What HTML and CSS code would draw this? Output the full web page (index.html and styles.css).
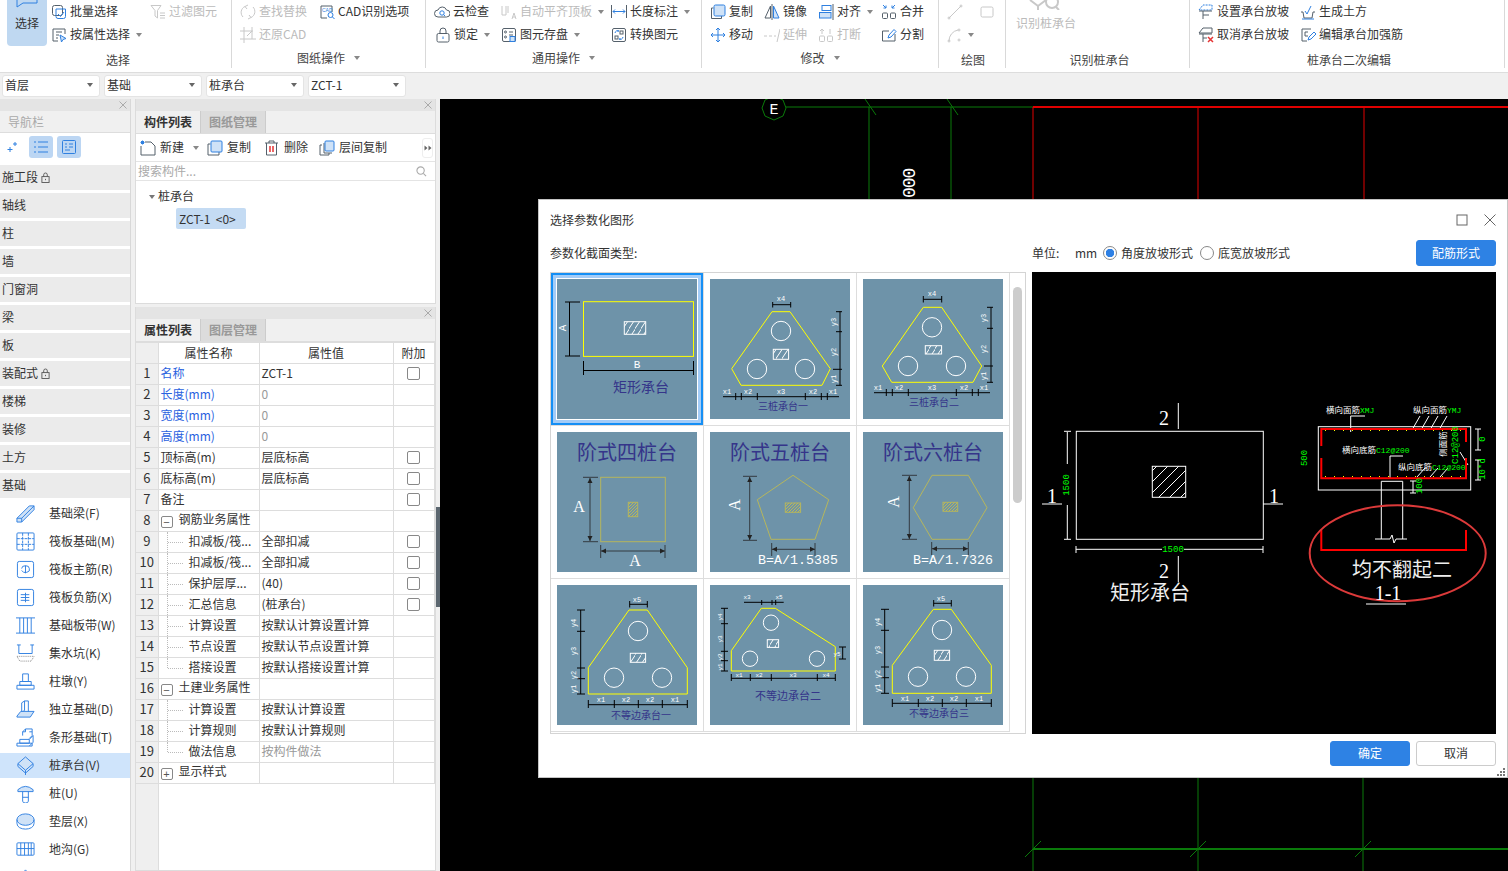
FILE: index.html
```html
<!DOCTYPE html>
<html lang="zh-CN">
<head>
<meta charset="utf-8">
<title>选择参数化图形</title>
<link rel="stylesheet" href="styles.css">
</head>
<body>
<div class="app">
  <header class="ribbon">
    <section class="rg rg1">
      <div class="rg-body">
        <button class="big-select"><svg class="big-arrow" viewBox="0 0 24 8"><path d="M2 0V7L8 3H22V0"/></svg><span>选择</span></button>
        <div class="it"><svg class="ic" viewBox="0 0 16 16"><rect x="1.5" y="1.5" width="10" height="10" rx="2"/><path class="b" d="M5 5H14.5V12.5A2 2 0 0 1 12.5 14.5H7A2 2 0 0 1 5 12.5ZM7 10L9.500 12.500L13 8"/></svg>批量选择</div>
        <div class="it off"><svg class="ic" viewBox="0 0 16 16"><path d="M1 1.500H11L7.500 6.500V14L5 12V6.500ZM10 9H15M10 11.500H15M10 14H15"/></svg>过滤图元</div>
        <div class="it it2"><svg class="ic" viewBox="0 0 16 16"><path d="M14 7V2H2V14H7M5 5H11M5 8H8M5 11H7"/><path class="fb" d="M9 8L15 11.500L12 12.500L10.500 15Z"/></svg>按属性选择<i class="caret"></i></div>
      </div>
      <div class="rg-label">选择</div>
    </section>
    <section class="rg rg2">
      <div class="rg-body">
        <div class="it off"><svg class="ic" viewBox="0 0 16 16"><path d="M3 13A6.500 6.500 0 0 1 5 2.500M13 3A6.500 6.500 0 0 1 11 13.500M8 1L5 2.500L7 5M8 15L11 13.500L9 11"/></svg>查找替换</div>
        <div class="it"><svg class="ic" viewBox="0 0 16 16"><path d="M13 8V2H2V14H8"/><text class="ic-cad" x="3" y="7.500">CAD</text><circle class="b" cx="11.500" cy="11" r="2.500"/><path class="b" d="M13.500 13L15.500 15"/></svg>CAD识别选项</div>
        <div class="it off it-wide"><svg class="ic" viewBox="0 0 16 16"><path d="M4 0V16M0 4H13M0 12H16M12 0V12M7 9L12 4"/></svg>还原CAD</div>
      </div>
      <div class="rg-label">图纸操作<i class="caret"></i></div>
    </section>
    <section class="rg rg3">
      <div class="rg-body">
        <div class="it"><svg class="ic" viewBox="0 0 16 16"><path d="M4 13A3.500 3.500 0 0 1 4 6A4.500 4.500 0 0 1 12.500 6A3.500 3.500 0 0 1 12.500 13Z"/><circle class="b" cx="8" cy="9" r="2.200"/><path class="b" d="M9.500 10.500L11 12"/></svg>云检查</div>
        <div class="it off"><svg class="ic" viewBox="0 0 16 16"><path d="M1 2V11H5V2M7 2V9M11 15L13 9L15 15M11.500 13H14.500"/></svg>自动平齐顶板<i class="caret"></i></div>
        <div class="it"><svg class="ic" viewBox="0 0 16 16"><path d="M0.500 1V14M15.500 1V14"/><path class="b" d="M2 7.500H14M4 5.500L2 7.500L4 9.500M12 5.500L14 7.500L12 9.500"/></svg>长度标注<i class="caret"></i></div>
        <div class="it it-lock"><svg class="ic" viewBox="0 0 16 16"><path d="M5 7V4A3 3 0 0 1 11 4V7"/><rect x="2" y="6.500" width="12" height="8.500" rx="1.500"/><path class="b" d="M8 9.500V12"/></svg>锁定<i class="caret"></i></div>
        <div class="it"><svg class="ic" viewBox="0 0 16 16"><rect x="1.500" y="1.500" width="13" height="13" rx="1.500"/><circle cx="4.500" cy="5" r="1"/><circle cx="4.500" cy="10" r="1"/><path d="M8 5H12M8 8H12"/><rect class="fb" x="9" y="9.500" width="5" height="5"/></svg>图元存盘<i class="caret"></i></div>
        <div class="it"><svg class="ic" viewBox="0 0 16 16"><rect x="1.500" y="1.500" width="13" height="13" rx="1.500"/><path class="b" d="M4 6A3 3 0 0 1 8 4H6M12 10A3 3 0 0 1 8 12H10"/><rect x="4" y="9" width="3" height="3"/><rect x="9" y="4" width="3" height="3"/></svg>转换图元</div>
      </div>
      <div class="rg-label">通用操作<i class="caret"></i></div>
    </section>
    <section class="rg rg4">
      <div class="rg-body">
        <div class="it"><svg class="ic" viewBox="0 0 16 16"><path d="M3.500 4H1.500V14.500H11.500V12"/><rect class="fb" x="4" y="1" width="11" height="11" rx="1.500"/></svg>复制</div>
        <div class="it"><svg class="ic" viewBox="0 0 16 16"><path d="M6.500 2L1 14H6.500Z"/><path class="fb" d="M9.500 2L15 14H9.500Z"/><path d="M8 0V16"/></svg>镜像</div>
        <div class="it"><svg class="ic" viewBox="0 0 16 16"><rect class="b" x="4" y="1.500" width="9" height="5"/><rect class="fb" x="1.500" y="8.500" width="11.500" height="5.500"/><path d="M15 0V16"/></svg>对齐<i class="caret"></i></div>
        <div class="it"><svg class="ic" viewBox="0 0 16 16"><rect x="1.500" y="9" width="5" height="5.500" rx="1"/><rect x="9.500" y="9" width="5" height="5.500" rx="1"/><path class="b" d="M2 1L5 4M5 1.500V4H2.500M14 1L11 4M11 1.500V4H13.500"/></svg>合并</div>
        <div class="it"><svg class="ic" viewBox="0 0 16 16"><path class="b" d="M8 1V15M1 8H15M6 3L8 1L10 3M6 13L8 15L10 13M3 6L1 8L3 10M13 6L15 8L13 10"/></svg>移动</div>
        <div class="it off"><svg class="ic" viewBox="0 0 16 16"><path d="M0 9H3M5 9H8M10 9H12M16 2L13 15"/></svg>延伸</div>
        <div class="it off"><svg class="ic" viewBox="0 0 16 16"><rect x="1.500" y="9" width="5" height="5.500" rx="1"/><rect x="9.500" y="9" width="5" height="5.500" rx="1"/><path d="M4 2V7M12 2V7M2 4L4 2L6 4"/></svg>打断</div>
        <div class="it"><svg class="ic" viewBox="0 0 16 16"><path d="M8 4H1.500V14H14V7"/><path class="b" d="M7 11L8 8L13 2.500L15 4.500L10 10Z"/></svg>分割</div>
      </div>
      <div class="rg-label">修改<i class="caret"></i></div>
    </section>
    <section class="rg rg5">
      <div class="rg-body">
        <div class="it off"><svg class="ic" viewBox="0 0 16 16"><path d="M2 14L14 2"/><circle cx="2" cy="14" r="1"/><circle cx="14" cy="2" r="1"/></svg></div>
        <div class="it off"><svg class="ic" viewBox="0 0 16 16"><rect x="2" y="3" width="12" height="10" rx="1.500"/></svg></div>
        <div class="it off it-arc"><svg class="ic" viewBox="0 0 16 16"><path d="M2 14A11 11 0 0 1 11 3"/><circle cx="2" cy="14" r="1"/><circle cx="12" cy="3" r="1"/><circle cx="12" cy="13" r="1"/></svg><i class="caret"></i></div>
      </div>
      <div class="rg-label">绘图</div>
    </section>
    <section class="rg rg6">
      <div class="rg-body">
        <div class="rec-big"><svg class="rec-icon" viewBox="0 0 32 10"><path d="M1 0L9 6M17 0L9 6M9 6V10"/><circle cx="23" cy="2" r="6"/><path d="M27 7L30 10"/></svg><span>识别桩承台</span></div>
      </div>
      <div class="rg-label">识别桩承台</div>
    </section>
    <section class="rg rg7">
      <div class="rg-body">
        <div class="it"><svg class="ic" viewBox="0 0 16 16"><path class="b" d="M1 6L5 1H14V6Z" stroke-dasharray="2 1"/><path d="M1 7H14M5 7V15M5 11H11"/></svg>设置承台放坡</div>
        <div class="it"><svg class="ic" viewBox="0 0 16 16"><path d="M1 8H3L4 14H12L13 8H15"/><path class="b" d="M5 7L7 10L11 2M2 15H14"/></svg>生成土方</div>
        <div class="it"><svg class="ic" viewBox="0 0 16 16"><path d="M1 6L5 1H14V6ZM1 7H14M5 7V15M5 11H9"/><path class="r" d="M10 10L15 15M15 10L10 15"/></svg>取消承台放坡</div>
        <div class="it"><svg class="ic" viewBox="0 0 16 16"><path d="M11 2H2V14H7M8 5H5V9H8"/><path class="b" d="M8 13L9 10L14 5L16 7L11 12Z"/></svg>编辑承台加强筋</div>
      </div>
      <div class="rg-label">桩承台二次编辑</div>
    </section>
  </header>

  <div class="selectors">
    <div class="combo">首层<i class="caret"></i></div>
    <div class="combo">基础<i class="caret"></i></div>
    <div class="combo">桩承台<i class="caret"></i></div>
    <div class="combo">ZCT-1<i class="caret"></i></div>
  </div>

  <main class="main">
    <aside class="nav">
      <div class="strip"><svg class="x" viewBox="0 0 8 8"><path d="M0.500 0.500L7.500 7.500M7.500 0.500L0.500 7.500"/></svg></div>
      <div class="nav-title">导航栏</div>
      <div class="nav-tools">
        <svg class="nav-star" viewBox="0 0 12 12"><path d="M8 1V5M6 3H10M3 6V11M0.500 8.500H5.500"/></svg>
        <span class="nav-btn"><svg viewBox="0 0 16 16"><path d="M1 3H3M1 8H3M1 13H3M5 3H15M5 8H15M5 13H15"/></svg></span>
        <span class="nav-btn"><svg viewBox="0 0 16 16"><rect x="1.500" y="1.500" width="13" height="13" rx="1"/><path d="M4 5H6M8 5H12M4 8H6M8 8H12M4 11H9"/></svg></span>
      </div>
      <ul class="bands">
        <li>施工段<svg class="lock" viewBox="0 0 10 12"><path d="M3 5V3A2 2 0 0 1 7 3V5"/><rect x="1" y="5" width="8" height="6.500"/><path d="M5 7.500V9"/></svg></li>
        <li>轴线</li><li>柱</li><li>墙</li><li>门窗洞</li><li>梁</li><li>板</li>
        <li>装配式<svg class="lock" viewBox="0 0 10 12"><path d="M3 5V3A2 2 0 0 1 7 3V5"/><rect x="1" y="5" width="8" height="6.500"/><path d="M5 7.500V9"/></svg></li>
        <li>楼梯</li><li>装修</li><li>土方</li><li>基础</li>
      </ul>
      <ul class="subs">
        <li><svg viewBox="0 0 20 20"><path class="fb" d="M1 15L14 2H19V6L6 19H1Z"/><path d="M1 15H6V19M6 15L19 2"/></svg>基础梁(F)</li>
        <li><svg viewBox="0 0 20 20"><rect x="1" y="1" width="18" height="18" rx="1"/><path d="M1 7H19M1 13H19M7 1V19M13 1V19" stroke-dasharray="3 1"/></svg>筏板基础(M)</li>
        <li><svg viewBox="0 0 20 20"><rect x="1.500" y="1.500" width="17" height="17" rx="2"/><path d="M10 6V14M6 9A4 3 0 0 1 14 9A4 3 0 0 1 6 11"/></svg>筏板主筋(R)</li>
        <li><svg viewBox="0 0 20 20"><rect x="1.500" y="1.500" width="17" height="17" rx="2"/><path d="M5 7H14M5 10H14M5 13H14M10 5V15"/></svg>筏板负筋(X)</li>
        <li><svg viewBox="0 0 20 20"><path d="M0 2H20M0 18H20M4 2V18M8 2V18M12 2V18M16 2V18" /></svg>基础板带(W)</li>
        <li><svg viewBox="0 0 20 20"><path d="M3 1V10H17V1M1 1H5M15 1H19"/><path class="g" d="M1 13H19L16 18H4Z" stroke-dasharray="1 1"/></svg>集水坑(K)</li>
        <li><svg viewBox="0 0 20 20"><path d="M7 2H13V10H7ZM4 10H16V14H4ZM1 14H19V18H1Z"/></svg>柱墩(Y)</li>
        <li><svg viewBox="0 0 20 20"><path d="M6 13V3L9 1H13V13M9 1V11L6 13"/><path class="fb" d="M1 17L5 12H19L15 18H1Z"/></svg>独立基础(D)</li>
        <li><svg viewBox="0 0 20 20"><path d="M7 8V4L10 1H17V8L14 11M10 1V4H7M14 4H17"/><path d="M4 12H14V16H4ZM1 16H17V19H1ZM14 12L18 8V15L14 19"/></svg>条形基础(T)</li>
        <li class="on"><svg viewBox="0 0 20 20"><path class="fb" d="M10 1L18 8L10 15L2 8Z"/><path d="M2 8V11L10 18L18 11V8M10 15V20"/></svg>桩承台(V)</li>
        <li><svg viewBox="0 0 20 20"><path class="fb" d="M2 6Q10 -1 18 6V8H2Z"/><path d="M7 8V18A3 2 0 0 0 13 18V8M7 14H13"/></svg>桩(U)</li>
        <li><svg viewBox="0 0 20 20"><ellipse class="fb" cx="10" cy="8" rx="9" ry="6"/><path d="M1 8V12C1 20 19 20 19 12V8"/></svg>垫层(X)</li>
        <li><svg viewBox="0 0 20 20"><rect x="1" y="3" width="18" height="13" rx="1"/><path d="M1 9H19M5 3V16M9 3V16M13 3V16M16 3V16"/></svg>地沟(G)</li>
        <li><svg viewBox="0 0 20 20"><path d="M10 2L5 8H15Z"/></svg></li>
      </ul>
    </aside>

    <div class="col">
      <section class="panel panel-top">
        <div class="strip"><svg class="x" viewBox="0 0 8 8"><path d="M0.500 0.500L7.500 7.500M7.500 0.500L0.500 7.500"/></svg></div>
        <div class="tabs"><span class="tab on">构件列表</span><span class="tab">图纸管理</span></div>
        <div class="bar">
          <span class="tool t-new"><svg class="ic" viewBox="0 0 16 16"><path d="M5 2H11L15 6V15H1V6"/><path class="b" d="M1 1L4 4M4 1L1 4M2.500 0.500V4.500M0.500 2.500H4.500"/></svg>新建<i class="caret"></i></span>
          <span class="tool t-copy"><svg class="ic" viewBox="0 0 16 16"><path d="M3.500 4H1V15H12V12"/><rect class="fb" x="4" y="1" width="11" height="11" rx="1"/></svg>复制</span>
          <span class="tool t-del"><svg class="ic" viewBox="0 0 16 16"><path d="M1 3H14M5 3V1H10V3M2.500 3V15H12.500V3"/><path class="r" d="M6 6V12M9 6V12"/></svg>删除</span>
          <span class="tool"><svg class="ic" viewBox="0 0 16 16"><path d="M3 5H1V15H10V13M5 3V13H13"/><rect class="fb" x="6" y="1" width="9" height="10" rx="1"/></svg>层间复制</span>
          <span class="more"><svg viewBox="0 0 8 6"><path d="M0.500 0.500L3.500 3L0.500 5.500ZM4.500 0.500L7.500 3L4.500 5.500Z"/></svg></span>
        </div>
        <div class="search"><span>搜索构件...</span><svg class="search-ic" viewBox="0 0 12 12"><circle cx="5" cy="5" r="4"/><path d="M8 8L11 11"/></svg></div>
        <div class="tree">
          <div class="tree-root"><i class="tree-caret"></i>桩承台</div>
          <div class="tree-item">ZCT-1 &nbsp;&lt;0&gt;</div>
        </div>
      </section>
      <section class="panel panel-bot">
        <div class="strip"><svg class="x" viewBox="0 0 8 8"><path d="M0.500 0.500L7.500 7.500M7.500 0.500L0.500 7.500"/></svg></div>
        <div class="tabs"><span class="tab on">属性列表</span><span class="tab">图层管理</span></div>
        <div class="prop-body">
          <table class="props">
            <colgroup><col class="c1"><col class="c2"><col class="c3"><col class="c4"></colgroup>
            <thead><tr><th></th><th>属性名称</th><th>属性值</th><th>附加</th></tr></thead>
            <tbody>
              <tr><td class="n">1</td><td class="bl">名称</td><td>ZCT-1</td><td class="ck"><i></i></td></tr>
              <tr><td class="n">2</td><td class="bl">长度(mm)</td><td class="gr">0</td><td></td></tr>
              <tr><td class="n">3</td><td class="bl">宽度(mm)</td><td class="gr">0</td><td></td></tr>
              <tr><td class="n">4</td><td class="bl">高度(mm)</td><td class="gr">0</td><td></td></tr>
              <tr><td class="n">5</td><td>顶标高(m)</td><td>层底标高</td><td class="ck"><i></i></td></tr>
              <tr><td class="n">6</td><td>底标高(m)</td><td>层底标高</td><td class="ck"><i></i></td></tr>
              <tr><td class="n">7</td><td>备注</td><td></td><td class="ck"><i></i></td></tr>
              <tr><td class="n">8</td><td class="grp"><b class="exp">−</b>钢筋业务属性</td><td></td><td></td></tr>
              <tr><td class="n">9</td><td class="ch">扣减板/筏...</td><td>全部扣减</td><td class="ck"><i></i></td></tr>
              <tr><td class="n">10</td><td class="ch">扣减板/筏...</td><td>全部扣减</td><td class="ck"><i></i></td></tr>
              <tr><td class="n">11</td><td class="ch">保护层厚...</td><td>(40)</td><td class="ck"><i></i></td></tr>
              <tr><td class="n">12</td><td class="ch">汇总信息</td><td>(桩承台)</td><td class="ck"><i></i></td></tr>
              <tr><td class="n">13</td><td class="ch">计算设置</td><td>按默认计算设置计算</td><td></td></tr>
              <tr><td class="n">14</td><td class="ch">节点设置</td><td>按默认节点设置计算</td><td></td></tr>
              <tr><td class="n">15</td><td class="ch last">搭接设置</td><td>按默认搭接设置计算</td><td></td></tr>
              <tr><td class="n">16</td><td class="grp"><b class="exp">−</b>土建业务属性</td><td></td><td></td></tr>
              <tr><td class="n">17</td><td class="ch">计算设置</td><td>按默认计算设置</td><td></td></tr>
              <tr><td class="n">18</td><td class="ch">计算规则</td><td>按默认计算规则</td><td></td></tr>
              <tr><td class="n">19</td><td class="ch last">做法信息</td><td class="gr">按构件做法</td><td></td></tr>
              <tr><td class="n">20</td><td class="grp"><b class="exp">+</b>显示样式</td><td></td><td></td></tr>
            </tbody>
          </table>
        </div>
      </section>
    </div>

    <div class="gutter"><span class="handle"></span></div>

    <div class="canvas">
      <svg class="cad" viewBox="0 0 1068 772">
        <g class="cad-g">
          <path d="M346 8H593M429 8V101M511 8V101M425 0L436 16M507 0L518 16"/>
          <path d="M334 -3L343 1L346 9L343 17L334 21L325 17L322 9L325 1Z"/>
          <path d="M593 679V772M758 679V772M923 679V772"/>
          <path class="thick" d="M593 750H1068"/>
          <path d="M585 758L601 742M750 758L766 742M915 758L931 742"/>
        </g>
        <g class="cad-r"><path class="thick" d="M593 8H1068"/><path d="M593 8V101M758 8V101M924 8V101"/></g>
        <text class="cad-e" x="334" y="15">E</text>
        <text class="cad-num" transform="translate(475 99) rotate(-90)">000</text>
      </svg>

      <div class="dialog">
        <div class="d-title"><span>选择参数化图形</span>
          <span class="d-win"><svg viewBox="0 0 12 12"><rect x="1" y="1" width="10" height="10"/></svg><svg viewBox="0 0 12 12"><path d="M0.500 0.500L11.500 11.500M11.500 0.500L0.500 11.500"/></svg></span>
        </div>
        <div class="d-ctrl">
          <span class="d-type">参数化截面类型:</span>
          <span class="d-unit">单位:</span><span class="d-mm">mm</span>
          <label class="radio on"><i></i>角度放坡形式</label>
          <label class="radio"><i></i>底宽放坡形式</label>
          <button class="btn pri d-rebar">配筋形式</button>
        </div>
        <div class="d-content">
          <div class="gallery">
            <div class="grid">
              <div class="cell sel"><svg class="th" viewBox="0 0 140 140">
                <defs>
                  <pattern id="hw" patternUnits="userSpaceOnUse" width="6" height="10"><path d="M-1 11L7 -1" class="hl"/></pattern>
                  <pattern id="hy" patternUnits="userSpaceOnUse" width="3" height="3"><path d="M-1 4L4 -1" class="hd"/></pattern>
                </defs>
                <rect class="y" x="26.500" y="22.700" width="110" height="54.700"/>
                <rect class="w hw" x="67.300" y="42.700" width="21.400" height="12.600"/>
                <path class="k" d="M12.500 23V77M8 23H23M8 77H23M26.500 91.500H136.500M26.500 82V96M136.500 82V96"/>
                <text class="lb" x="80" y="89">B</text>
                <text class="lb" transform="translate(9 49) rotate(-90)">A</text>
                <text class="cap c14" x="84" y="113">矩形承台</text>
              </svg></div>
              <div class="cell"><svg class="th" viewBox="0 0 140 140">
                <path class="y" d="M62 32.700H80L120.300 89.700L112 106.300H31L21.700 89.700Z"/>
                <circle class="w" cx="71" cy="52" r="9.700"/><circle class="w" cx="47" cy="90" r="9.700"/><circle class="w" cx="95" cy="90" r="9.700"/>
                <rect class="w hw" x="63.300" y="70.300" width="15.300" height="10"/>
                <path class="k" d="M62.700 25.700H80.700M62.700 23V28.500M80.700 23V28.500M130 32.700V106.300M126 32.700H132M126 52.700H132M123 90.300H132M126 106.300H132M13 117.700H129M25.700 114V121M31.300 114V121M47.300 114V121M95.300 114V121M111.300 114V121M117.300 114V121"/>
                <text class="sm" x="71" y="22">x4</text><text class="sm" x="17" y="115">x1</text><text class="sm" x="38" y="115">x2</text><text class="sm" x="71" y="115">x3</text><text class="sm" x="103" y="115">x2</text><text class="sm" x="123" y="115">x1</text>
                <text class="sm" transform="translate(126 43) rotate(-90)">y3</text><text class="sm" transform="translate(126 73) rotate(-90)">y2</text><text class="sm" transform="translate(126 100) rotate(-90)">y1</text>
                <text class="cap c10" x="73" y="131">三桩承台一</text>
              </svg></div>
              <div class="cell"><svg class="th" viewBox="0 0 140 140">
                <path class="y" d="M60.300 28.300H78.700L118.700 87L110 103.300H28.700L19.300 87Z"/>
                <circle class="w" cx="69" cy="48.300" r="9.700"/><circle class="w" cx="45" cy="87" r="9.700"/><circle class="w" cx="93" cy="87" r="9.700"/>
                <rect class="w hw" x="62.300" y="66.700" width="16.300" height="8.300"/>
                <path class="k" d="M60.300 20.300H78.700M60.300 17V23.500M78.700 17V23.500M128 28.300V103.300M124 28.300H130M124 49.300H130M121 87H130M124 103.300H130M11 113.700H127M23.300 110V117M29.300 110V117M45.300 110V117M93.300 110V117M109.300 110V117M115.300 110V117"/>
                <text class="sm" x="69" y="17">x4</text><text class="sm" x="15" y="111">x1</text><text class="sm" x="36" y="111">x2</text><text class="sm" x="69" y="111">x3</text><text class="sm" x="101" y="111">x2</text><text class="sm" x="121" y="111">x1</text>
                <text class="sm" transform="translate(123 39) rotate(-90)">y3</text><text class="sm" transform="translate(123 70) rotate(-90)">y2</text><text class="sm" transform="translate(123 97) rotate(-90)">y1</text>
                <text class="cap c10" x="71" y="127">三桩承台二</text>
              </svg></div>
              <div class="cell"><svg class="th" viewBox="0 0 140 140">
                <text class="cap c20" x="70" y="28">阶式四桩台</text>
                <rect class="yd" x="43.700" y="45.300" width="64.600" height="64.400"/>
                <rect class="yd hy" x="71.300" y="70.300" width="9.400" height="14.400"/>
                <path class="dk" d="M33 46V109M26 45.300H41M26 109.700H41M44 119H108M43.700 113V126M108 113V126"/>
                <path class="ar" d="M33 46L30.500 51H35.500ZM33 109L30.500 104H35.500ZM44 119L49 116.500V121.500ZM108 119L103 116.500V121.500Z"/>
                <text class="big" x="22" y="80">A</text><text class="big" x="78" y="134">A</text>
              </svg></div>
              <div class="cell"><svg class="th" viewBox="0 0 140 140">
                <text class="cap c20" x="70" y="28">阶式五桩台</text>
                <path class="yd" d="M83 43.300L118.700 67.700L105 107.300H61L47.300 67.700Z"/>
                <rect class="yd hy" x="75.300" y="71" width="15.300" height="9.300"/>
                <path class="dk" d="M39.700 45V108M33 44.300H47M33 108.300H47M62 117.300H105M61.700 111V124M105 111V124"/>
                <path class="ar" d="M39.700 45L37.200 50H42.200ZM39.700 108L37.200 103H42.200ZM62 117.300L67 114.800V119.800ZM105 117.300L100 114.800V119.800Z"/>
                <text class="big r" transform="translate(30 73) rotate(-90)">A</text>
                <text class="mono" x="88" y="132">B=A/1.5385</text>
              </svg></div>
              <div class="cell"><svg class="th" viewBox="0 0 140 140">
                <text class="cap c20" x="70" y="28">阶式六桩台</text>
                <path class="yd" d="M69 43.300H105.300L124 75.700L105.300 107.300H69L50.300 75.700Z"/>
                <rect class="yd hy" x="80" y="70.300" width="14.700" height="9"/>
                <path class="dk" d="M46.300 44V107M39 43.300H54M39 107.300H54M69 116.700H105M68.700 110V123M105.300 110V123"/>
                <path class="ar" d="M46.300 44L43.800 49H48.800ZM46.300 107L43.800 102H48.800ZM69 116.700L74 114.200V119.200ZM105 116.700L100 114.200V119.200Z"/>
                <text class="big r" transform="translate(36 70) rotate(-90)">A</text>
                <text class="mono" x="90" y="132">B=A/1.7326</text>
              </svg></div>
              <div class="cell"><svg class="th" viewBox="0 0 140 140">
                <path class="y" d="M72 25H90.300L130.300 82.700V109H31.300V82.700Z"/>
                <circle class="w" cx="81" cy="46" r="9.700"/><circle class="w" cx="57" cy="92.700" r="9.700"/><circle class="w" cx="105" cy="92.700" r="9.700"/>
                <rect class="w hw" x="73.300" y="68.300" width="15.300" height="9"/>
                <path class="k" d="M72.700 19.300H90.300M72.700 16V22.500M90.300 16V22.500M23.700 25V109M20 25H28M20 46.300H28M20 83H28M20 93.700H28M20 109H28M31.300 119.700H130.300M31.300 115V123M57.300 115V123M81.300 115V123M105.300 115V123M130.300 115V123"/>
                <text class="sm" x="80" y="17">x5</text><text class="sm" x="44" y="117">x1</text><text class="sm" x="69" y="117">x2</text><text class="sm" x="93" y="117">x2</text><text class="sm" x="118" y="117">x1</text>
                <text class="sm" transform="translate(19 38) rotate(-90)">y4</text><text class="sm" transform="translate(19 66) rotate(-90)">y3</text><text class="sm" transform="translate(19 90) rotate(-90)">y2</text><text class="sm" transform="translate(19 104) rotate(-90)">y1</text>
                <text class="cap c10" x="84" y="134">不等边承台一</text>
              </svg></div>
              <div class="cell"><svg class="th" viewBox="0 0 140 140">
                <path class="y" d="M51.300 23.300H65.300L125.300 61.700V86H21.300V65.700Z"/>
                <circle class="w" cx="61" cy="37.700" r="7.700"/><circle class="w" cx="40" cy="73.700" r="7.700"/><circle class="w" cx="107" cy="73.700" r="7.700"/>
                <rect class="w hw" x="57.300" y="54.700" width="11.300" height="7.700"/>
                <path class="k" d="M34 17.300H73.700M51.700 15V20M62 15V20M65.700 15V20M14.300 23.300V86M11 23.300H18M11 38.700H18M11 66.300H18M11 75.700H18M11 86H18M21.300 93.300H125.300M21.300 89V96M40.300 89V96M61.300 89V96M107.300 89V96M125.300 89V96M132.700 62V74M129 62H136M129 74H136"/>
                <text class="sm s6" x="37" y="14">x3</text><text class="sm s6" x="69" y="14">x5</text><text class="sm s6" x="29" y="92">x1</text><text class="sm s6" x="49" y="92">x2</text><text class="sm s6" x="83" y="92">x3</text><text class="sm s6" x="116" y="92">x4</text>
                <text class="sm s6" transform="translate(12 32) rotate(-90)">y4</text><text class="sm s6" transform="translate(12 54) rotate(-90)">y3</text><text class="sm s6" transform="translate(12 72) rotate(-90)">y2</text><text class="sm s6" transform="translate(12 82) rotate(-90)">y1</text><text class="sm s6" x="127" y="71">y5</text>
                <text class="cap c11" x="78" y="115">不等边承台二</text>
              </svg></div>
              <div class="cell"><svg class="th" viewBox="0 0 140 140">
                <path class="y" d="M70.300 24.300H88.300L128.300 80.300V108.300H29.300V80.300Z"/>
                <circle class="w" cx="79" cy="45" r="9.700"/><circle class="w" cx="55" cy="91.700" r="9.700"/><circle class="w" cx="103" cy="91.700" r="9.700"/>
                <rect class="w hw" x="71.300" y="65.300" width="15.300" height="10"/>
                <path class="k" d="M70.700 18.300H88.300M70.700 15V21.500M88.300 15V21.500M21.700 24.300V108.300M18 24.300H26M18 45.300H26M18 82H26M18 92.700H26M18 108.300H26M29.300 118.300H128.300M29.300 114V122M55.300 114V122M79.300 114V122M103.300 114V122M128.300 114V122"/>
                <text class="sm" x="78" y="16">x5</text><text class="sm" x="42" y="116">x1</text><text class="sm" x="67" y="116">x2</text><text class="sm" x="91" y="116">x2</text><text class="sm" x="116" y="116">x1</text>
                <text class="sm" transform="translate(17 37) rotate(-90)">y4</text><text class="sm" transform="translate(17 65) rotate(-90)">y3</text><text class="sm" transform="translate(17 89) rotate(-90)">y2</text><text class="sm" transform="translate(17 103) rotate(-90)">y1</text>
                <text class="cap c10" x="76" y="132">不等边承台三</text>
              </svg></div>
            </div>
            <div class="sb"><span></span></div>
          </div>
          <svg class="preview" viewBox="0 0 464 462">
            <defs><pattern id="hp" patternUnits="userSpaceOnUse" width="11" height="11"><path d="M-1 12L12 -1" class="hl"/></pattern></defs>
            <g class="pw">
              <rect x="44.300" y="159.300" width="187" height="108"/>
              <rect class="hp" x="120.300" y="194.300" width="33.400" height="31"/>
              <path d="M35.300 160V192M35.300 233V267M32 159.300H39M32 267.300H39M44 277.300H130M152 277.300H231M44 274V281M231 274V281M146.300 131V157M146.300 284V310M10 232H30M231 232H251"/>
              <rect x="286.300" y="154.700" width="152.400" height="63.300"/>
              <path d="M349.300 209.300V267M370.700 209.300V267M349.300 209.300H370.700M343 267H358L360 263L362 271L364 267H375M318.700 144V160M318.700 144H333M380 158L388 144M389 158L397 144M398 158L406 144M407 158L415 144M371 184H358M358 184V207M385 205L393 196M398 205L406 196M408 205L416 196M428 180L436 193"/>
              <path d="M443 157H449M446 157V178M443 178H449M443 188H449M446 188V208M443 208H449M381 209V221M378 209H384M378 221H384"/>
            </g>
            <path class="prd" d="M289.300 174V157H434V170M289.300 186V206.300H434V186M289.300 258V278H434V258"/>
            <path class="pdot" d="M293 158.500H432M293 204.500H432"/>
            <ellipse class="pell" cx="365.700" cy="281.300" rx="88" ry="48"/>
            <text class="pn" x="132" y="153">2</text><text class="pn" x="132" y="306">2</text><text class="pn" x="20" y="231">1</text><text class="pn" x="242" y="231">1</text>
            <text class="pcap" x="118" y="328">矩形承台</text>
            <text class="pcap" x="370" y="305">均不翻起二</text>
            <text class="pn" x="356" y="328">1-1</text>
            <path class="pline" d="M334 332H374"/>
            <text class="pgn mid" x="141" y="280">1500</text>
            <text class="pgn mid" transform="translate(37 213) rotate(-90)">1500</text>
            <text class="pgn mid" transform="translate(275 186) rotate(-90)">500</text>
            <text class="pgn mid" transform="translate(390 214) rotate(-90)">100</text>
            <text class="pgn mid" transform="translate(453 167) rotate(-90)">0</text>
            <text class="pgn mid" transform="translate(453 197) rotate(-90)">10*d</text>
            <text class="pgn mid" transform="translate(426 173) rotate(-90)">C12@200</text>
            <text class="pwt mid" transform="translate(414 172) rotate(-90)">侧面筋</text>
            <text class="pwt" x="294" y="141">横向面筋<tspan class="pgt">XMJ</tspan></text>
            <text class="pwt" x="381" y="141">纵向面筋<tspan class="pgt">YMJ</tspan></text>
            <text class="pwt" x="310" y="181">横向底筋<tspan class="pgt">C12@200</tspan></text>
            <text class="pwt" x="366" y="198">纵向底筋<tspan class="pgt">C12@200</tspan></text>
          </svg>
        </div>
        <div class="d-foot"><button class="btn pri">确定</button><button class="btn">取消</button></div>
        <svg class="grip" viewBox="0 0 9 8"><path d="M6 0H8V2H6ZM3 3H5V5H3ZM6 3H8V5H6ZM0 6H2V8H0ZM3 6H5V8H3ZM6 6H8V8H6Z"/></svg>
      </div>
    </div>
  </main>
</div>
</body>
</html>
```

FILE: styles.css
```css
* { box-sizing: border-box; }
html, body { margin: 0; height: 100%; overflow: hidden; }
body { font: 12px/1.2 "Noto Sans CJK SC", "Noto Sans", sans-serif; color: #333; background: #f0f0f0; }
ul { list-style: none; margin: 0; padding: 0; }
button { font: inherit; padding: 0; }
.app { display: flex; flex-direction: column; width: 1508px; height: 871px; }

/* ribbon */
.ribbon { display: flex; flex: none; height: 73px; background: #fff; border-bottom: 1px solid #ddd; padding-bottom: 4px; }
.rg { display: flex; flex-direction: column; flex: none; border-right: 1px solid #d9d9d9; }
.rg-body { height: 50px; flex: none; display: grid; grid-auto-rows: 23px; align-content: start; padding-left: 8px; }
.rg-label { height: 20px; flex: none; display: flex; align-items: center; justify-content: center; color: #444; }
.rg-label .caret { margin-left: 9px; }
.rg2 .rg-label, .rg3 .rg-label, .rg4 .rg-label { margin-top: -2px; }
.rg1 .rg-label { padding-left: 5px; }
.rg5 .rg-label { padding-left: 2px; }
.rg6 .rg-label, .rg7 .rg-label { padding-left: 4px; }
.rg1 { width: 232px; }
.rg1 .rg-body { padding-left: 7px; grid-template-columns: 44px 99px 80px; }
.big-select { grid-row: span 2; width: 40px; height: 46px; border: 0; border-radius: 0 0 4px 4px; background: #bfd8f1; color: #333; display: flex; flex-direction: column; align-items: center; }
.big-arrow { width: 24px; height: 8px; margin-bottom: 8px; fill: none; stroke: #2f80e0; }
.rg2 { width: 194px; }
.rg2 .rg-body { grid-template-columns: 79px 100px; }
.rg3 { width: 276px; }
.rg3 .rg-body { grid-template-columns: 67px 110px 90px; }
.rg4 { width: 237px; }
.rg4 .rg-body { grid-template-columns: 54px 54px 63px 50px; }
.rg5 { width: 67px; }
.rg5 .rg-body { grid-template-columns: 32px 20px; }
.rg6 { width: 184px; }
.rg6 .rg-body { padding-left: 10px; }
.rg7 { width: 315px; }
.rg7 .rg-body { grid-template-columns: 102px 120px; }
.it { display: flex; align-items: center; gap: 3px; height: 23px; white-space: nowrap; }
.it2 { grid-column: 2 / span 2; }
.it-lock { padding-left: 1px; }
.it.off { color: #bbb; }
.it .caret { margin-left: 3px; }
.it-arc .caret { margin-left: 2px; }
.ic { width: 16px; height: 16px; flex: none; fill: none; stroke: #55606b; stroke-width: 1; }
.ic .b { stroke: #2f80e0; }
.ic .r { stroke: #e53535; stroke-width: 1.500; }
.ic .fb { fill: #cfe2f7; stroke: #2f80e0; }
.ic-cad { font: 5px "Liberation Sans", sans-serif; fill: #2f80e0; stroke: none; }
.off .ic { stroke: #c8c8c8; }
.caret { display: inline-block; flex: none; width: 0; height: 0; border: 3.5px solid transparent; border-top: 4px solid #888; border-bottom: 0; }
.rec-big { color: #bbb; }
.rec-icon { display: block; width: 32px; height: 10px; margin: 0 0 6px 13px; fill: none; stroke: #c8c8c8; stroke-width: 2; }

/* selectors */
.selectors { flex: none; height: 26px; display: flex; gap: 4px; padding: 2px 0 0 2px; background: #f0f0f0; }
.combo { width: 98px; height: 22px; padding: 0 3px 2px 2px; display: flex; align-items: center; justify-content: space-between; background: #fff; border: 1px solid #e4e4e4; border-radius: 3px; }
.combo .caret { margin-right: 3px; border-top-color: #666; }

/* main */
.main { flex: 1; min-height: 0; display: flex; }
.nav { width: 131px; flex: none; background: #fff; border-right: 1px solid #d8d8d8; overflow: hidden; }
.strip { height: 12px; flex: none; background: #e4e4e4; display: flex; justify-content: flex-end; align-items: center; padding-right: 3px; }
.x { width: 8px; height: 8px; fill: none; stroke: #aaa; }
.nav-title { height: 22px; line-height: 21px; padding-left: 8px; color: #aaa; background: #f0f0f0; border-bottom: 1px solid #ddd; }
.nav-tools { height: 28px; display: flex; align-items: center; gap: 4px; padding-left: 7px; }
.nav-star { width: 12px; height: 12px; margin-right: 6px; fill: none; stroke: #2f80e0; }
.nav-btn { width: 24px; height: 22px; border-radius: 3px; background: #bcd6f3; display: flex; align-items: center; justify-content: center; }
.nav-btn svg { width: 16px; height: 16px; fill: none; stroke: #2f80e0; }
.bands { padding-top: 4px; display: flex; flex-direction: column; gap: 3px; }
.bands li { height: 25px; padding-left: 2px; display: flex; align-items: center; gap: 3px; background: #ebebeb; }
.lock { width: 9px; height: 11px; fill: none; stroke: #555; }
.subs { margin-top: 3px; }
.subs li { height: 28px; padding-bottom: 3px; padding-left: 16px; display: flex; align-items: center; gap: 14px; }
.subs svg { width: 19px; height: 19px; flex: none; fill: none; stroke: #2f80e0; stroke-width: 1; }
.subs .fb { fill: #cfe2f7; }
.subs .g { stroke: #888; }
.subs li.on { background: linear-gradient(#cfe4fb 25px, #fff 25px); }

.col { width: 301px; margin-left: 4px; flex: none; display: flex; flex-direction: column; gap: 3px; }
.panel { background: #fff; border: 1px solid #dcdcdc; border-top: 0; display: flex; flex-direction: column; }
.panel-top { height: 205px; }
.panel-bot { flex: 1; min-height: 0; }
.tabs { height: 23px; flex: none; display: flex; background: #f0f0f0; border-bottom: 1px solid #ddd; }
.tab { width: 65px; text-align: center; line-height: 22px; font-weight: 700; color: #333; border-right: 1px solid #ccc; }
.tab + .tab { font-weight: 700; background: #dcdcdc; color: #999; }
.bar { height: 28px; flex: none; display: flex; align-items: center; padding-left: 4px; border-bottom: 1px solid #e4e4e4; }
.tool { display: flex; align-items: center; gap: 4px; }
.tool .caret { margin-left: 5px; }
.t-new { width: 67px; }
.t-copy { width: 57px; }
.t-del { width: 55px; }
.more { margin-left: 35px; width: 11px; height: 20px; display: flex; align-items: center; justify-content: center; border: 1px solid #eee; border-radius: 3px; }
.more svg { width: 8px; height: 6px; fill: #666; }
.search { height: 19px; flex: none; display: flex; align-items: center; justify-content: space-between; padding: 0 8px 0 2px; color: #aaa; border-bottom: 1px solid #e4e4e4; }
.search-ic { width: 11px; height: 11px; fill: none; stroke: #aaa; stroke-width: 1.2; }
.tree-root { display: flex; align-items: center; gap: 3px; height: 21px; margin-top: 5px; padding-left: 13px; }
.tree-caret { width: 0; height: 0; border: 3.500px solid transparent; border-top: 4px solid #777; border-bottom: 0; }
.tree-item { width: 70px; height: 21px; margin: 1px 0 0 40px; padding-left: 3px; line-height: 21px; background: #c4dbf3; border-radius: 2px; white-space: nowrap; }

.prop-body { flex: 1; min-height: 0; background: linear-gradient(90deg, #efefef 22px, #ddd 22px, #ddd 23px, #fff 23px); }
.props { border-collapse: collapse; table-layout: fixed; width: 298px; }
.c1 { width: 22px; } .c2 { width: 101px; } .c3 { width: 134px; } .c4 { width: 41px; }
.props th, .props td { height: 21px; padding: 0 2px; border: 1px solid #ddd; border-left: 0; font-weight: 400; white-space: nowrap; overflow: hidden; background: #fff; }
.props td { padding-bottom: 2px; }
.props th { background: #fff; text-align: center; }
.props th:first-child { background: #efefef; }
.props td.n { text-align: center; background: #efefef; padding: 0 0 2px; font-size: 13px; }
.bl { color: #2a62e0; }
.gr { color: #999; }
.ck { text-align: center; }
.ck i { display: block; width: 13px; height: 13px; margin: 0 auto; border: 1px solid #888; border-radius: 2px; }
.grp { overflow: visible; }
.exp { display: inline-block; width: 12px; height: 12px; margin-right: 6px; font: 400 11px/10px "Liberation Sans", sans-serif; text-align: center; vertical-align: -2px; border: 1px solid #888; border-radius: 2px; color: #555; }
.props td.ch { position: relative; padding-left: 30px; }
.ch::before { content: ""; position: absolute; left: 8px; top: 0; bottom: 0; border-left: 1px dotted #bbb; }
.ch::after { content: ""; position: absolute; left: 9px; width: 15px; top: 10px; border-top: 1px dotted #bbb; }
.ch.last::before { bottom: 10px; }

.gutter { width: 4px; flex: none; }
.handle { display: block; width: 4px; height: 100px; margin-top: 408px; background: #5c6770; }

/* canvas + dialog */
.canvas { flex: 1; min-width: 0; position: relative; background: #000; overflow: hidden; }
.cad { display: block; width: 1068px; height: 772px; fill: none; }
.cad-g { stroke: #0a7a0a; }
.cad-r { stroke: #e00000; }
.thick { stroke-width: 2; }
.cad-e { font: 15px "Liberation Mono", monospace; fill: #fff; text-anchor: middle; }
.cad-num { font: 18px "Liberation Mono", monospace; fill: #fff; letter-spacing: -1px; }

.dialog { position: absolute; left: 98px; top: 100px; width: 970px; height: 579px; padding: 0 11px 0 11px; background: #fff; border: 1px solid #c4c4c4; display: flex; flex-direction: column; }
.d-title { height: 40px; flex: none; display: flex; align-items: center; justify-content: space-between; font-size: 12px; }
.d-win { display: flex; gap: 16px; }
.d-win svg { width: 12px; height: 12px; fill: none; stroke: #666; }
.d-ctrl { height: 26px; flex: none; display: flex; align-items: center; }
.d-type { width: 482px; }
.d-unit { width: 43px; }
.d-mm { width: 28px; }
.radio { display: flex; align-items: center; gap: 4px; margin-right: 7px; }
.radio i { width: 14px; height: 14px; border: 1px solid #888; border-radius: 50%; background: #fff; }
.radio.on i { background: radial-gradient(circle, #2e80e4 4px, #fff 4.500px); }
.btn { width: 80px; height: 25px; border: 1px solid #ccc; border-radius: 3px; background: #fff; color: #333; }
.btn.pri { background: #2e82e4; border-color: #2e82e4; color: #fff; }
.d-rebar { margin-left: auto; height: 26px; }
.d-content { height: 462px; margin-top: 6px; flex: none; display: flex; gap: 6px; }
.gallery { width: 476px; flex: none; display: flex; overflow: hidden; border: 1px solid #d4d4d4; }
.grid { width: 459px; flex: none; display: grid; grid-template-columns: repeat(3, 153px); grid-auto-rows: 153px; }
.cell { padding: 6px 6px 0; border-right: 1px solid #ddd; border-bottom: 1px solid #ddd; }
.cell.sel { box-shadow: inset 0 0 0 2px #158ff5, inset 0 0 0 5px #a3ccf7; }
.sb { flex: 1; display: flex; justify-content: center; padding-top: 14px; }
.sb span { width: 9px; height: 216px; border-radius: 5px; background: #ccc; }
.th { display: block; width: 140px; height: 140px; background: #6e93a9; fill: none; }
.y { stroke: #ffff00; }
.yd { stroke: #b6b65c; }
.w { stroke: #fff; }
.k { stroke: #000; }
.dk { stroke: #333a40; }
.ar { fill: #222; }
.hl { stroke: #fff; }
.hd { stroke: #b6b65c; }
.hw { fill: url(#hw); }
.hy { fill: url(#hy); }
.hp { fill: url(#hp); }
.lb { font: 11px "Liberation Mono", monospace; fill: #fff; text-anchor: middle; }
.sm { font: 7px "Liberation Mono", monospace; fill: #fff; text-anchor: middle; }
.s6 { font-size: 6px; }
.cap { fill: #35358a; text-anchor: middle; font-family: "Noto Sans CJK SC", sans-serif; }
.c10 { font-size: 10px; } .c11 { font-size: 11px; } .c14 { font-size: 14px; } .c20 { font-size: 20px; }
.big { font: 16px "Liberation Serif", serif; fill: #fff; text-anchor: middle; }
.mono { font: 13.300px "Liberation Mono", monospace; fill: #fff; text-anchor: middle; }
.preview { width: 464px; height: 462px; flex: none; background: #000; }
.pw { fill: none; stroke: #fff; }
.prd { fill: none; stroke: #ff0000; stroke-width: 2; }
.pdot { fill: none; stroke: #ffff00; stroke-dasharray: 1 8; }
.pell { fill: none; stroke: #dc3a3a; stroke-width: 2; }
.pline { stroke: #fff; }
.pn { font: 20px "Liberation Serif", serif; fill: #fff; text-anchor: middle; }
.pcap { font-size: 20px; fill: #eee; text-anchor: middle; }
.pgn { font: 9px "Liberation Mono", monospace; fill: #00ff00; }
.pwt { font-size: 8.500px; fill: #fff; }
.pgt { font-family: "Liberation Mono", monospace; font-size: 8px; fill: #00ff00; }
.mid { text-anchor: middle; }
.d-foot { height: 25px; margin-top: 7px; flex: none; display: flex; justify-content: flex-end; gap: 6px; }
.grip { position: absolute; right: 1px; bottom: 1px; width: 9px; height: 8px; fill: #777; }
```
